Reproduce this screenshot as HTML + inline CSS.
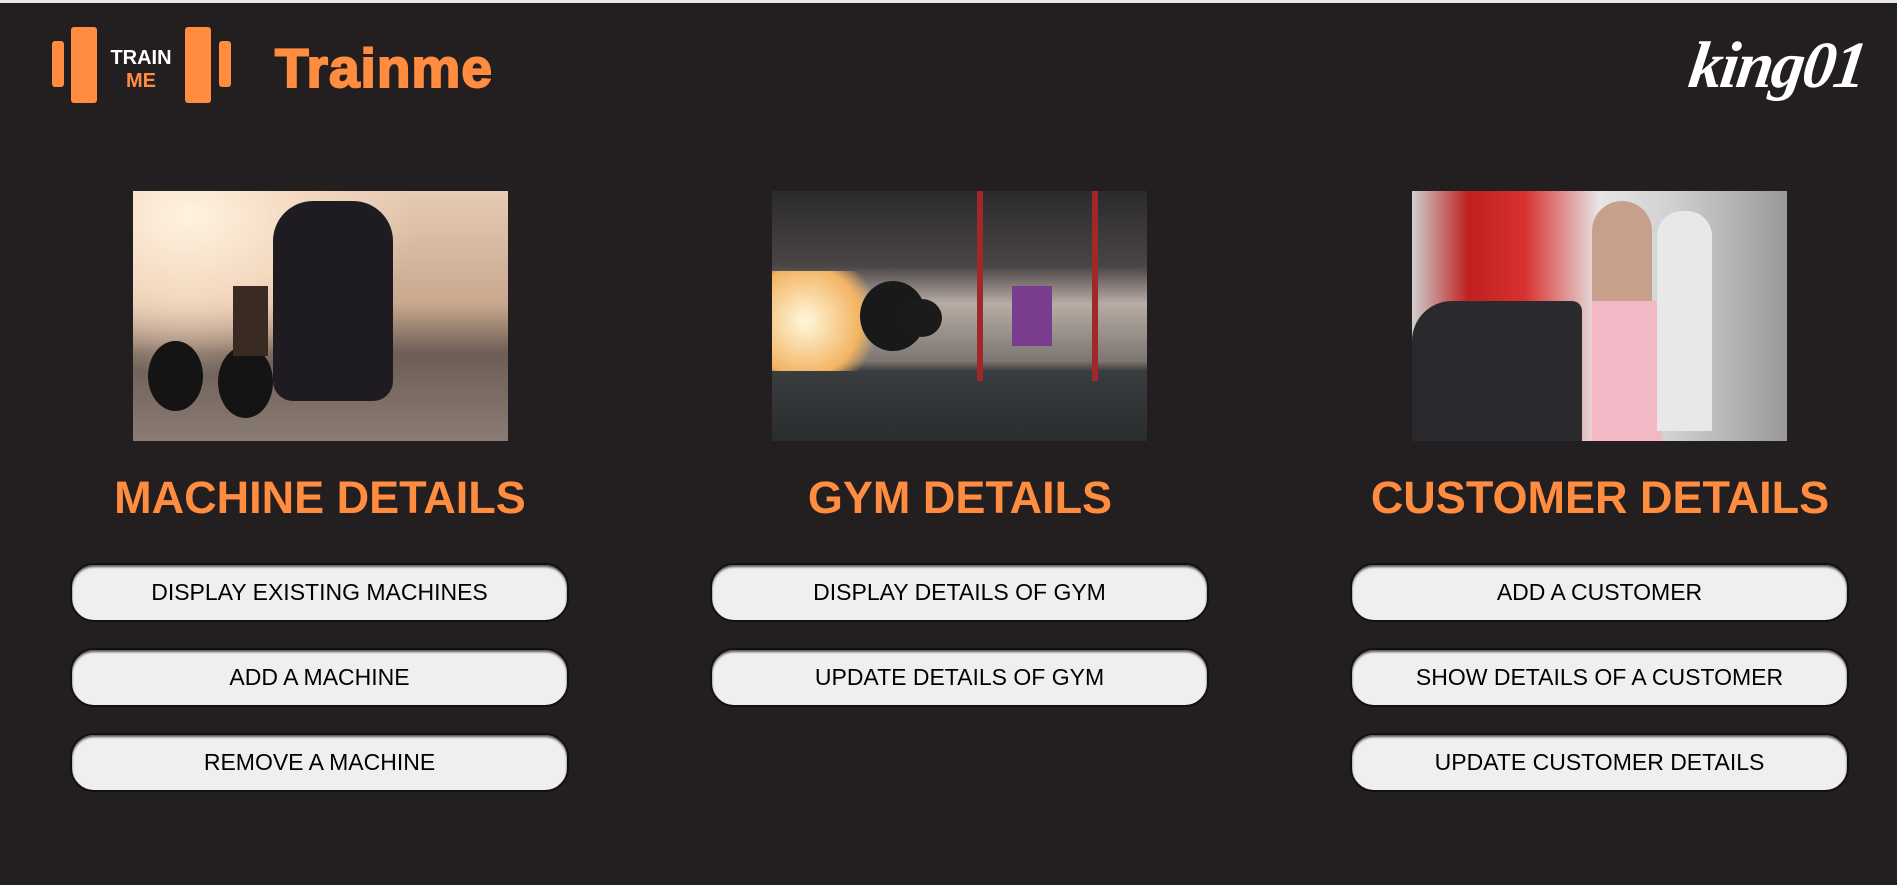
<!DOCTYPE html>
<html><head><meta charset="utf-8"><style>
*{margin:0;padding:0;box-sizing:border-box}
body{width:1897px;height:885px;background:#231f20;position:relative;overflow:hidden;font-family:"Liberation Sans",sans-serif}
.top{position:absolute;left:0;top:0;width:1897px;height:3px;background:#e8e8e8}
.bar{position:absolute;background:#ff8c3f;border-radius:3px}
.img{position:absolute;top:191px;width:375px;height:250px;overflow:hidden}
h2{position:absolute;top:472px;width:640px;text-align:center;color:#ff8c3f;font-size:45px;font-weight:bold;letter-spacing:0px}
.btn{position:absolute;width:499px;height:59px;background:#efefef;border-radius:24px;border:2px solid #111;box-shadow:inset 0 2px 2px #555;text-align:center;line-height:55px;font-size:23px;color:#000}
</style></head><body>
<div class="top"></div>
<div class="bar" style="left:52px;top:41px;width:12px;height:46px"></div>
<div class="bar" style="left:71px;top:27px;width:26px;height:76px"></div>
<div class="bar" style="left:185px;top:27px;width:26px;height:76px"></div>
<div class="bar" style="left:219px;top:41px;width:12px;height:46px"></div>
<div style="position:absolute;left:104px;top:47px;width:74px;text-align:center;color:#fff;font-weight:bold;font-size:20px">TRAIN</div>
<div style="position:absolute;left:104px;top:70px;width:74px;text-align:center;color:#ff8c3f;font-weight:bold;font-size:20px">ME</div>
<div style="position:absolute;left:275px;top:36px;color:#ff8c3f;font-weight:900;font-size:55px;letter-spacing:1px;-webkit-text-stroke:2px #ff8c3f">Trainme</div>
<div style="position:absolute;left:1690px;top:28px;color:#fff;font-family:'Liberation Serif',serif;font-style:italic;font-weight:bold;font-size:66px;letter-spacing:-2px;transform:skewX(-8deg)">king01</div>

<div class="img" style="left:133px;background:radial-gradient(ellipse at 15% 10%,#fff3e0 0,#f4d9c0 25%,transparent 50%),linear-gradient(180deg,#e6cbb5 0,#c9a88e 45%,#6d5d55 65%,#8a7c74 100%)">
<div style="position:absolute;left:140px;top:10px;width:120px;height:200px;background:#1e1c20;border-radius:40px 40px 20px 20px"></div>
<div style="position:absolute;left:15px;top:150px;width:55px;height:70px;background:#141414;border-radius:50%"></div>
<div style="position:absolute;left:85px;top:155px;width:55px;height:72px;background:#141414;border-radius:50%"></div>
<div style="position:absolute;left:100px;top:95px;width:35px;height:70px;background:#3a2b22"></div>
</div>
<div class="img" style="left:772px;background:linear-gradient(180deg,#2b2a2c 0,#4a4546 30%,#b8aca5 45%,#7d7671 68%,#3a3d3f 72%,#2a2d2e 100%)">
<div style="position:absolute;left:0;top:80px;width:110px;height:100px;background:radial-gradient(circle at 30% 50%,#fff8dc,#f3b463 60%,transparent 80%)"></div>
<div style="position:absolute;left:88px;top:90px;width:66px;height:70px;background:#191919;border-radius:50%"></div>
<div style="position:absolute;left:130px;top:108px;width:40px;height:38px;background:#1b1b1b;border-radius:50%"></div>
<div style="position:absolute;left:240px;top:95px;width:40px;height:60px;background:#7a3c8c"></div>
<div style="position:absolute;left:205px;top:0;width:6px;height:190px;background:#a02828"></div>
<div style="position:absolute;left:320px;top:0;width:6px;height:190px;background:#a02828"></div>
</div>
<div class="img" style="left:1412px;background:linear-gradient(90deg,#cfcfcf 0,#c02020 15%,#d83030 30%,#e6e6e6 50%,#cfcfcf 70%,#999 100%)">
<div style="position:absolute;left:0;top:110px;width:170px;height:140px;background:#2a2a2e;border-radius:40px 10px 0 0"></div>
<div style="position:absolute;left:180px;top:10px;width:60px;height:240px;background:#c7a08c;border-radius:30px 30px 0 0"></div>
<div style="position:absolute;left:180px;top:110px;width:70px;height:140px;background:#f3b8c6"></div>
<div style="position:absolute;left:245px;top:20px;width:55px;height:220px;background:#e8e8e8;border-radius:25px 25px 0 0"></div>
</div>

<h2 style="left:0">MACHINE DETAILS</h2>
<h2 style="left:640px">GYM DETAILS</h2>
<h2 style="left:1280px">CUSTOMER DETAILS</h2>

<div class="btn" style="left:70px;top:563px">DISPLAY EXISTING MACHINES</div>
<div class="btn" style="left:70px;top:648px">ADD A MACHINE</div>
<div class="btn" style="left:70px;top:733px">REMOVE A MACHINE</div>
<div class="btn" style="left:710px;top:563px">DISPLAY DETAILS OF GYM</div>
<div class="btn" style="left:710px;top:648px">UPDATE DETAILS OF GYM</div>
<div class="btn" style="left:1350px;top:563px">ADD A CUSTOMER</div>
<div class="btn" style="left:1350px;top:648px">SHOW DETAILS OF A CUSTOMER</div>
<div class="btn" style="left:1350px;top:733px">UPDATE CUSTOMER DETAILS</div>
</body></html>
